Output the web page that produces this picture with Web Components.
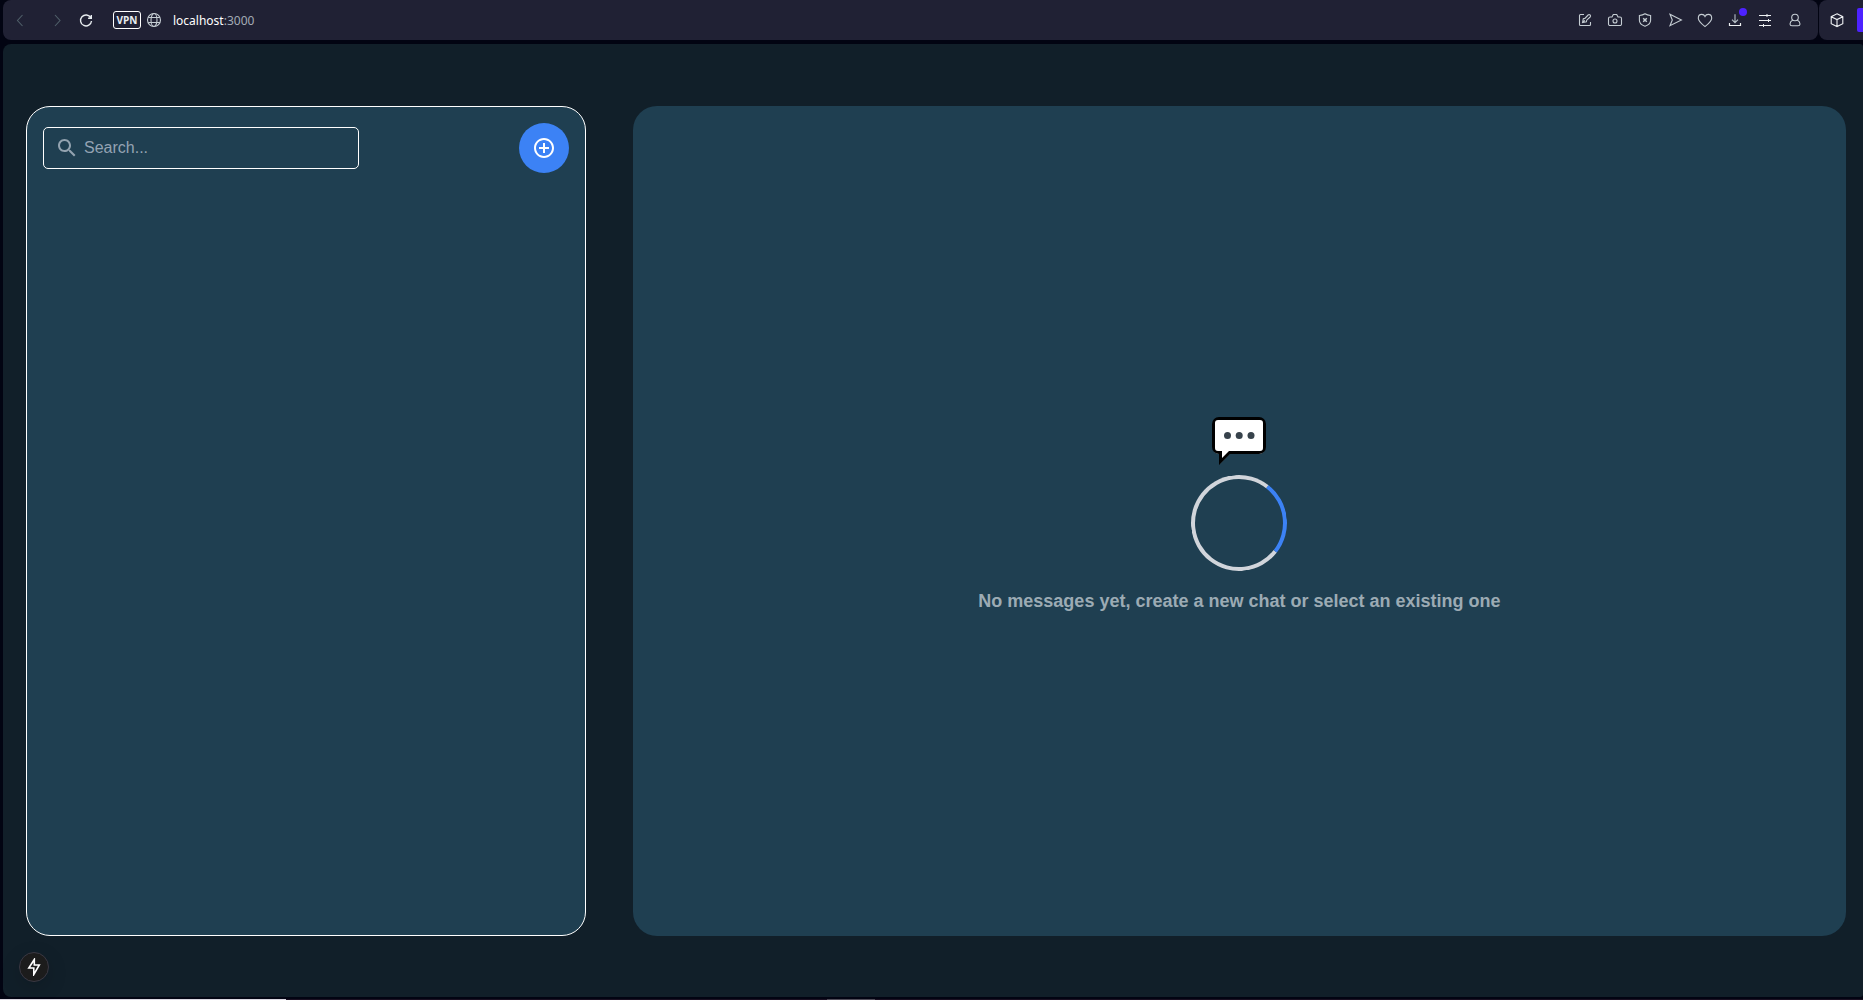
<!DOCTYPE html>
<html lang="en">
<head>
<meta charset="utf-8">
<title>localhost:3000</title>
<style>
  html, body { height: 100%; }
  body { margin: 0; background: #020412; font-family: "Liberation Sans", Arial, sans-serif; }
</style>
</head>
<body>
<app-window></app-window>
<script>
const define = (name, html) => customElements.define(name, class extends HTMLElement {
  constructor() {
    super();
    const t = document.createElement('template');
    t.innerHTML = html;
    this.attachShadow({ mode: 'open' }).append(t.content.cloneNode(true));
  }
});

const icons = {
  back: '<path d="M12.500 5 7.500 10.500l5 5.500"/>',
  forward: '<path d="M8 5 13 10.500 8 16"/>',
  reload: '<path d="M14.800 7.700A5.500 5.500 0 1 0 15.500 11M15.300 5v3.200h-3.200" stroke-width="1.400"/>',
  globe: '<circle cx="10" cy="10" r="6.500"/><ellipse cx="10" cy="10" rx="3" ry="6.500"/><path d="M4.200 7.500h11.600M4.200 12.500h11.600"/>',
  edit: '<path d="M9 4.500H5.500a1 1 0 0 0-1 1v9a1 1 0 0 0 1 1h9a1 1 0 0 0 1-1V12"/><path d="m7.500 12.500.8-3.800 1.600-.3 3.200-3.400a1.400 1.400 0 0 1 2 2l-3.400 3.200-.3 1.600zM7.500 12.500l2.300-2.200"/>',
  camera: '<path d="M5 7h2l1.300-2.500h3.400L13 7h2a1.500 1.500 0 0 1 1.500 1.500V14a1.500 1.500 0 0 1-1.500 1.500H5A1.500 1.500 0 0 1 3.500 14V8.500A1.500 1.500 0 0 1 5 7z"/><circle cx="10" cy="11" r="2"/>',
  shield: '<path d="M10 3.800c1.700 1.200 3.500 1.600 5.600 1.700v4.800c0 3-2.300 4.900-5.600 6-3.300-1.100-5.600-3-5.600-6V5.500c2.100-.1 3.900-.5 5.600-1.700z"/><path d="m8.200 8.200 3.600 3.600m0-3.600-3.600 3.600" stroke-width="1.500"/>',
  send: '<path d="m5 4.300 11.400 5.700L5 15.700 7.300 10z"/>',
  heart: '<path d="M10 16.500C6.500 13.800 3.300 11.400 3.300 8.200c0-2.100 1.500-3.800 3.500-3.800 1.400 0 2.600.7 3.200 2 .6-1.300 1.800-2 3.200-2 2 0 3.500 1.700 3.500 3.800 0 3.200-3.200 5.600-6.700 8.300z"/>',
  download: '<path d="M10 4.300v8.200M7 9.700l3 3 3-3" stroke="#b9c2c9"/><path d="M4.500 13v2.500h11V13" stroke-width="1.200"/>',
  sliders: '<path d="M4 5.500h12M4 10.500h12M4 15.500h12" stroke-width="1"/><path d="M12 4v3M13.500 9v3M8.500 14v3" stroke-width="1"/>',
  person: '<circle cx="10" cy="7.500" r="3.300"/><path d="M7.800 10C6 11 5 12.500 5 14c0 1.200.8 1.800 2 1.800h6c1.200 0 2-.6 2-1.800 0-1.500-1-3-2.800-4"/>',
  cube: '<path d="m10 3.800 5.800 2.900v7L10 16.600l-5.800-2.900v-7zM4.200 6.700 10 9.600l5.800-2.900M10 9.600v7"/>'
};

customElements.define('line-icon', class extends HTMLElement {
  connectedCallback() {
    if (this.shadowRoot) return;
    this.attachShadow({ mode: 'open' }).innerHTML = `
      <style>:host { display: block; width: 20px; height: 20px; } svg { display: block; }</style>
      <svg width="20" height="20" viewBox="0 0 20 20" fill="none" stroke="currentColor" stroke-width="1.100" aria-hidden="true">${icons[this.getAttribute('name')]}</svg>`;
  }
});

const tool = (icon, label) => `<button aria-label="${label}"><line-icon name="${icon}"></line-icon></button>`;

define('browser-bar', `
  <style>
    :host { display: flex; gap: 1px; height: 40px; padding-left: 3px; color: #c5cdd3; font-family: "Noto Sans", "Open Sans", sans-serif; }
    .bar, .side { display: flex; align-items: center; background: #202134; }
    .bar { flex: 1; border-radius: 8px; padding: 0 13px 0 7px; justify-content: space-between; }
    .side { border-radius: 8px 0 0 8px; padding-left: 8px; justify-content: space-between; width: 36px; }
    .group { display: flex; align-items: center; }
    button { position: relative; border: 0; background: none; padding: 0; color: inherit; display: block; font: inherit; }
    .nav { color: #4f5f69; gap: 17px; }
    .reload { color: #e7ecef; margin-left: 9px; }
    .vpn { box-sizing: border-box; width: 28px; height: 18px; margin: 0 3px 0 17px; border: 1px solid #fff; border-radius: 3px; color: #e9edf0; font: 700 10px/16px "Open Sans", sans-serif; text-align: center; }
    .url { margin-left: 9px; padding-top: 2px; color: #a3abb5; font-size: 12px; line-height: 20px; text-decoration: none; }
    .url b { color: #fff; font-weight: 400; }
    .tools { gap: 10px; }
    .dot::after { content: ""; position: absolute; top: -2px; right: -2px; width: 8px; height: 8px; border-radius: 50%; background: #4d22ff; }
    .accent { width: 6px; height: 24px; background: #4d22ff; border-radius: 2px 0 0 2px; }
    .bright { color: #eef1f3; }
  </style>
  <div class="bar">
    <div class="group">
      <div class="group nav">${tool('back', 'Back')}${tool('forward', 'Forward')}</div>
      <div class="group reload">${tool('reload', 'Reload')}</div>
      <button class="vpn">VPN</button>
      <line-icon name="globe"></line-icon>
      <a class="url" href="#"><b>localhost</b>:3000</a>
    </div>
    <div class="group tools">
      ${tool('edit', 'Edit page')}${tool('camera', 'Snapshot')}${tool('shield', 'Tracker blocker')}${tool('send', 'Send')}${tool('heart', 'Add bookmark')}
      <button class="dot bright" aria-label="Downloads"><line-icon name="download"></line-icon></button>
      <button class="bright" aria-label="Easy setup"><line-icon name="sliders"></line-icon></button>${tool('person', 'Profile')}
    </div>
  </div>
  <div class="side"><button class="bright" aria-label="Extensions"><line-icon name="cube"></line-icon></button><span class="accent"></span></div>
`);

define('search-field', `
  <style>
    :host { display: block; width: 60%; }
    label { box-sizing: border-box; display: flex; align-items: center; gap: 5px; height: 42px; padding: 0 11px; border: 1px solid #fff; border-radius: 5px; color: #93a3b0; }
    svg { flex: none; }
    input { flex: 1; min-width: 0; border: 0; padding: 0; background: none; outline: 0; color: #fff; font: 16px/24px "Liberation Sans", Arial, sans-serif; }
    input::placeholder { color: #94a3b3; opacity: 1; }
  </style>
  <label>
    <svg width="24" height="24" viewBox="0 0 24 24" fill="currentColor" aria-hidden="true"><path d="M15.500 14h-.79l-.28-.27C15.410 12.590 16 11.110 16 9.500 16 5.910 13.090 3 9.500 3S3 5.910 3 9.500 5.910 16 9.500 16c1.610 0 3.090-.59 4.230-1.570l.27.28v.79l5 4.990L20.490 19l-4.990-5zm-6 0C7.010 14 5 11.990 5 9.500S7.010 5 9.500 5 14 7.010 14 9.500 11.990 14 9.500 14z"/></svg>
    <input type="text" placeholder="Search..." aria-label="Search">
  </label>
`);

define('chat-sidebar', `
  <style>
    :host { display: block; box-sizing: border-box; padding: 16px; border: 1px solid #fff; border-radius: 24px; background: #1f3f51; }
    header { display: flex; align-items: center; justify-content: space-between; }
    button { display: grid; place-items: center; width: 50px; height: 50px; padding: 0; border: 0; border-radius: 50%; background: #3c82f5; color: #fff; }
  </style>
  <header>
    <search-field></search-field>
    <button aria-label="New chat">
      <svg width="24" height="24" viewBox="0 0 24 24" fill="currentColor"><path d="M13 7h-2v4H7v2h4v4h2v-4h4v-2h-4V7zm-1-5C6.480 2 2 6.480 2 12s4.480 10 10 10 10-4.480 10-10S17.520 2 12 2zm0 18c-4.410 0-8-3.590-8-8s3.590-8 8-8 8 3.590 8 8-3.590 8-8 8z"/></svg>
    </button>
  </header>
`);

define('chat-empty', `
  <style>
    :host { display: flex; flex-direction: column; align-items: center; justify-content: center; box-sizing: border-box; padding-bottom: 10px; border-radius: 24px; background: #1f3f51; }
    svg { display: block; }
    .spinner { box-sizing: border-box; width: 96px; height: 96px; margin: 8px 0 16px; border: 4px solid #d1d5db; border-right-color: #3c82f5; border-radius: 50%; transform: rotate(-7deg); }
    p { margin: 0; color: #9cabb4; font-size: 18px; line-height: 28px; font-weight: 700; text-align: center; }
  </style>
  <svg width="54" height="50" viewBox="0 0 54 50" aria-hidden="true">
    <path d="M6.500 1.500h41a5 5 0 0 1 5 5V32a5 5 0 0 1-5 5H17.500L8 46.500V37H6.500a5 5 0 0 1-5-5V6.500a5 5 0 0 1 5-5z" fill="#fff"/>
    <path fill-rule="evenodd" d="M7 0h40a7 7 0 0 1 7 7v23a7 7 0 0 1-7 7H18L7 48V37a7 7 0 0 1-7-7V7a7 7 0 0 1 7-7zM6 3a3 3 0 0 0-3 3v25a3 3 0 0 0 3 3h4v7l7-7h31a3 3 0 0 0 3-3V6a3 3 0 0 0-3-3z"/>
    <g fill="#37424b"><circle cx="15.500" cy="18.500" r="3.500"/><circle cx="27.200" cy="18.500" r="3.500"/><circle cx="39" cy="18.500" r="3.500"/></g>
  </svg>
  <div class="spinner" role="status" aria-label="Loading"></div>
  <p>No messages yet, create a new chat or select an existing one</p>
`);

define('dev-badge', `
  <style>
    :host { display: block; }
    button { box-sizing: border-box; display: grid; place-items: center; width: 30px; height: 30px; padding: 0; border: 1px solid #3a3843; border-radius: 50%; background: #1c1c1c; box-shadow: 0 6px 20px rgba(0, 0, 0, .15); }
  </style>
  <button aria-label="Static route"><svg width="14" height="18" viewBox="0 0 14 18" fill="none" stroke="#fff" stroke-width="1.600"><path d="M7.300 1.500 1.800 10h5v6.500L12.300 7h-5z"/></svg></button>
`);

define('app-window', `
  <style>
    :host { display: flex; flex-direction: column; box-sizing: border-box; min-height: 100vh; }
    main { position: relative; flex: 1; display: grid; grid-template-columns: 6fr 13fr; gap: 47px; box-sizing: border-box; margin: 4px 0 2px 3px; padding: 62px 17px 61px 23px; border-radius: 8px 3px 3px 8px; background: #111f29; }
    dev-badge { position: absolute; left: 16px; bottom: 15px; }
    footer { display: flex; height: 1px; background: #1b1022; }
    .active { width: 286px; background: #dcd8e2; }
    .mark { width: 48px; margin-left: 541px; background: #504c58; }
  </style>
  <browser-bar></browser-bar>
  <main>
    <chat-sidebar></chat-sidebar>
    <chat-empty></chat-empty>
    <dev-badge></dev-badge>
  </main>
  <footer><span class="active"></span><span class="mark"></span></footer>
`);
</script>
</body>
</html>
